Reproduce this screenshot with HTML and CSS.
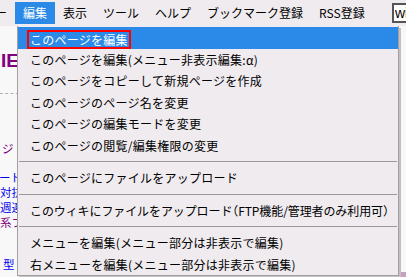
FILE: index.html
```html
<!DOCTYPE html>
<html lang="ja">
<head>
    <meta charset="UTF-8">
    <title>編集メニュー</title>
    <link rel="stylesheet" href="styles.css">
</head>
<body>
    <div class="menubar">
        <span class="menu-item first">ー</span>
        <span class="menu-item active">編集</span>
        <span class="menu-item">表示</span>
        <span class="menu-item">ツール</span>
        <span class="menu-item">ヘルプ</span>
        <span class="menu-item">ブックマーク登録</span>
        <span class="menu-item">RSS登録</span>
        <input class="search" type="text" value="wiki">
    </div>

    <div class="page">
        <div class="side">
            <div class="title">IE</div>
            <div class="dashed"></div>
            <div class="link visited shift">ジ</div>
            <div class="link cut">ード</div>
            <div class="link">対抗</div>
            <div class="link">週連</div>
            <div class="link visited">系フ</div>
            <div class="link low">型</div>
        </div>
        <div class="bottom-strip">
            <div class="photo"></div>
            <div class="pink"></div>
        </div>

        <!-- dropdown for 編集 -->
        <div class="dropdown">
            <div class="dd-item selected"><span class="mark">このページを編集</span></div>
            <div class="dd-item">このページを編集(メニュー非表示編集:α)</div>
            <div class="dd-item">このページをコピーして新規ページを作成</div>
            <div class="dd-item">このページのページ名を変更</div>
            <div class="dd-item">このページの編集モードを変更</div>
            <div class="dd-item">このページの閲覧/編集権限の変更</div>
            <div class="dd-sep"></div>
            <div class="dd-item">このページにファイルをアップロード</div>
            <div class="dd-sep"></div>
            <div class="dd-item tight">このウィキにファイルをアップロード<span class="paren">（</span>FTP機能/管理者のみ利用可<span class="paren">）</span></div>
            <div class="dd-sep"></div>
            <div class="dd-item">メニューを編集(メニュー部分は非表示で編集)</div>
            <div class="dd-item">右メニューを編集(メニュー部分は非表示で編集)</div>
        </div>
    </div>
</body>
</html>
```

FILE: styles.css
```css
body {
    margin: 0;
    width: 406px;
    height: 277px;
    overflow: hidden;
    font-family: "Noto Sans CJK JP", "DejaVu Sans", sans-serif;
    font-size: 12px;
    background: #f8f8f8;
}
.menubar {
    display: flex;
    align-items: center;
    height: 26px;
    background: #efebef;
    overflow: hidden;
}
.menu-item {
    padding: 0 8px;
    line-height: 22px;
    color: #000;
    white-space: nowrap;
}
.menu-item.first {
    margin-left: -5px;
    padding-left: 0;
}
.menu-item.active {
    background: #2b8ae8;
    color: #fff;
}
.search {
    flex-shrink: 0;
    width: 44px;
    height: 20px;
    box-sizing: border-box;
    margin-left: auto;
    margin-right: -30px;
    padding: 0 1px;
    border: 2px solid #555;
    border-right: none;
    font-family: "Liberation Sans", sans-serif;
    font-size: 14px;
    color: #000;
    background: #fff;
}
.page {
    position: relative;
    height: 251px;
}
.side {
    padding-top: 25px;
    width: 60px;
}
.title {
    font-family: "Liberation Sans", sans-serif;
    font-weight: bold;
    font-size: 19px;
    color: #800080;
    padding-left: 1px;
    line-height: 20px;
}
.dashed {
    margin-top: 22px;
    border-top: 1px dashed #b0b0b0;
    width: 40px;
}
.link {
    color: #0000ee;
    font-size: 11.5px;
    line-height: 15px;
    white-space: nowrap;
}
.link.visited {
    color: #800080;
}
.link.shift {
    margin-top: 47px;
    padding-left: 2px;
    margin-bottom: 14px;
}
.link.cut {
    margin-left: -1px;
}
.link.low {
    margin-top: 27px;
    padding-left: 3px;
}
.bottom-strip {
    position: absolute;
    left: 0;
    right: 0;
    bottom: 0;
    height: 5px;
    display: flex;
}
.photo {
    margin-left: 110px;
    width: 270px;
    background: #3b3232;
}
.pink {
    flex: 1;
    background: #c8a0c4;
}
.dropdown {
    position: absolute;
    top: 0;
    left: 17px;
    width: 380px;
    background: #efebef;
    border: 1px solid #a0a0a0;
    border-top: none;
    box-shadow: 2px 2px 0 #c4c0c4;
    padding-top: 1px;
    letter-spacing: 0.25px;
}
.dd-item {
    height: 21.5px;
    line-height: 21.5px;
    padding-left: 12px;
    white-space: nowrap;
    color: #000;
}
.dd-item.tight {
    letter-spacing: -0.1px;
}
.paren {
    font-feature-settings: "halt";
}
.dd-item.selected {
    background: #2b8ae8;
    color: #fff;
}
.mark {
    display: inline-block;
    margin-left: -3px;
    padding: 0 1px;
    line-height: 15px;
    border: 2px solid #ff0000;
    vertical-align: middle;
}
.dd-sep {
    margin: 5px 1px;
    border-top: 1px solid #999;
}
```
